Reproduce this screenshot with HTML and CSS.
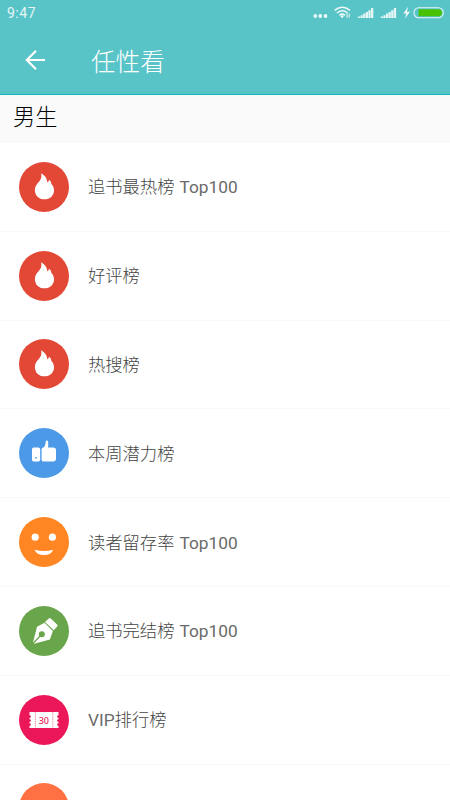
FILE: index.html
```html
<!DOCTYPE html>
<html lang="zh-CN">
<head>
    <meta charset="utf-8">
    <meta name="viewport" content="width=device-width, initial-scale=1.0">
    <title>任性看</title>
    <link rel="stylesheet" href="styles.css">
</head>
<body>
    <header class="app-header">
        <div class="status-bar">
            <span class="clock">9:47</span>
            <svg class="status-icons" width="134" height="20" viewBox="0 0 134 20" fill="#fff">
                <g opacity=".9">
                    <circle cx="2.300" cy="14" r="1.900"/>
                    <circle cx="7.300" cy="14" r="1.900"/>
                    <circle cx="12.500" cy="14" r="1.900"/>
                </g>
                <!-- wifi -->
                <g fill="none" stroke="#fff" stroke-width="1.500" opacity=".9">
                    <path d="M21.600 8.400Q29.300 2 37 8.400"/>
                    <path d="M24 11Q29.200 6.600 34.600 11"/>
                    <path d="M26.400 13.300Q29.200 11 32 13.300"/>
                    <path d="M34.100 11.500v4.200M36.200 11.500v4.200" stroke-width="1"/>
                </g>
                <circle cx="29.100" cy="14.500" r="1.300"/>
                <!-- signal bars -->
                <path id="signal" opacity=".85" d="M45 14.600h2.200v1.400H45zM47.600 13.200h2.200V16h-2.200zM50.200 11.600h2.200V16h-2.200zM52.800 10h2.200v6h-2.200zM55.400 8.200h2.200V16h-2.200zM58 6h2.300v10H58z"/>
                <use href="#signal" x="22.800"/>
                <path d="M95 4.800l-4.600 6.600h2.800l-1.200 5 5-6.600h-3z" opacity=".9"/>
                <rect x="101" y="5.700" width="29.200" height="10" rx="4.700" fill="none" stroke="#fff" stroke-width="1.100" opacity=".85"/>
                <path d="M105.600 7.200h19.800a3.500 3.500 0 0 1 0 7H105.600z" fill="#48c200"/>
            </svg>
        </div>
        <div class="toolbar">
            <svg class="back" width="22" height="22" viewBox="0 0 22 22" fill="none" stroke="#fff" stroke-width="2.200">
                <path d="M21 11H3M12 1.800L2.800 11l9.200 9.200"/>
            </svg>
            <h1 class="title">任性看</h1>
        </div>
    </header>

    <h2 class="section-title">男生</h2>
    <ul class="rank-list">
        <li class="rank-item">
            <svg class="rank-icon red" viewBox="0 0 50 50">
                <path id="flame" fill="#fff" d="M22 11.200c3.800 2 6.200 5.200 6.400 9.300.9-.5 1.400-1.300 1.500-2.700 1.700 1.100 2.300 2.400 2.400 4 1.700 2 2.700 4 2.700 6.600 0 5.200-4.200 8.900-9.600 8.900-5.600 0-9.500-3.900-9.500-9.400 0-4 2.100-5.900 4.300-8.500 1.900-2.300 2.800-4.800 1.800-8.200z"/>
            </svg>
            <span class="rank-name">追书最热榜 <span class="latin">Top100</span></span>
        </li>
        <li class="rank-item">
            <svg class="rank-icon red" viewBox="0 0 50 50"><use href="#flame"/></svg>
            <span class="rank-name">好评榜</span>
        </li>
        <li class="rank-item">
            <svg class="rank-icon red" viewBox="0 0 50 50"><use href="#flame"/></svg>
            <span class="rank-name">热搜榜</span>
        </li>
        <li class="rank-item">
            <svg class="rank-icon blue" viewBox="0 0 50 50">
                <rect x="13" y="19.600" width="8.200" height="14" rx="1.800" fill="#fff"/>
                <circle cx="17" cy="29.800" r=".9" fill="#4c99e8"/>
                <path fill="#fff" d="M22.600 21.300q0-1.500 1.700-1.800c1.500-.4 2.200-3.200 2.300-5.300.1-2.300 2.500-2 2.600.1.200 2 .1 3.600-.2 5.200h5.100q2.900 0 2.900 2.600v8.500q0 3-3 3h-9q-2.400 0-2.400-2.200z"/>
            </svg>
            <span class="rank-name">本周潜力榜</span>
        </li>
        <li class="rank-item">
            <svg class="rank-icon orange" viewBox="0 0 50 50">
                <circle cx="16.200" cy="20.200" r="3.600" fill="#fff"/>
                <circle cx="33.400" cy="20.200" r="3.600" fill="#fff"/>
                <path fill="#fff" d="M15.600 32.700q9.400 2.400 18.600 0-2 5.400-9.300 5.400t-9.300-5.400z"/>
            </svg>
            <span class="rank-name">读者留存率 <span class="latin">Top100</span></span>
        </li>
        <li class="rank-item">
            <svg class="rank-icon green" viewBox="0 0 50 50">
                <path fill="#fff" d="M29.800 12.500q1-1 2-.1l6.300 6q1 1 .1 2l-3.400 3.800-8.800-8.200z"/>
                <path fill="#fff" d="M25.500 16.700l8.400 8.300-3 8.600-15.700 4.200-1.200-1.200 4-15.900z"/>
                <path d="M14 37.500l8.500-9" stroke="#69a54a" stroke-width="1.200"/>
                <circle cx="22.800" cy="28.200" r="3" fill="#69a54a"/>
            </svg>
            <span class="rank-name">追书完结榜 <span class="latin">Top100</span></span>
        </li>
        <li class="rank-item">
            <svg class="rank-icon pink" viewBox="0 0 50 50">
                <path fill="#fff" d="M10.500 17h29v3.200a1.400 1.400 0 0 0 0 2.800v1.200a1.400 1.400 0 0 0 0 2.800v1.200a1.400 1.400 0 0 0 0 2.800v2h-29v-2a1.400 1.400 0 0 0 0-2.800V27a1.400 1.400 0 0 0 0-2.800V23a1.400 1.400 0 0 0 0-2.800z"/>
                <path d="M16.400 17v16M33.800 17v16" stroke="#eb1759" stroke-width=".6" stroke-dasharray="1 .8"/>
                <text class="ticket-number" x="24.800" y="28.500" text-anchor="middle">30</text>
            </svg>
            <span class="rank-name"><span class="latin">VIP</span>排行榜</span>
        </li>
        <li class="rank-item">
            <svg class="rank-icon coral" viewBox="0 0 50 50"></svg>
        </li>
    </ul>
</body>
</html>
```

FILE: styles.css
```css
body {
    margin: 0;
    height: 800px;
    overflow: hidden;
    background-color: #fff;
    font-family: Roboto, "Noto Sans CJK SC", sans-serif;
}

h1, h2, ul { margin: 0; padding: 0; }

/* Header */
.app-header {
    height: 95px;
    box-sizing: border-box;
    background-color: #58c4c8;
    border-bottom: 1px solid #14b9bd;
    color: #fff;
}
.status-bar {
    display: flex;
    justify-content: space-between;
    height: 26px;
    padding: 2px 3px 0 7px;
    box-sizing: border-box;
}
.clock {
    font-size: 14px;
    line-height: 23px;
    letter-spacing: 0.5px;
    opacity: 0.85;
}
.toolbar {
    display: flex;
    align-items: center;
    height: 68px;
    padding-left: 24px;
}
.title {
    margin-left: 45px;
    padding-top: 6px;
    font-size: 24.6px;
    font-weight: 300;
    line-height: 36px;
}

/* Ranking list */
.section-title {
    height: 48px;
    padding-left: 13px;
    box-sizing: border-box;
    background-color: #fafafa;
    color: #000;
    font-size: 22.2px;
    font-weight: 300;
    line-height: 45px;
}
.rank-list {
    height: 657px;
    overflow: hidden;
    list-style: none;
}
.rank-item {
    display: flex;
    align-items: center;
    gap: 19px;
    height: 88.8px;
    padding-left: 19px;
    box-sizing: border-box;
    border-bottom: 1px solid #f8f8f8;
}
.rank-icon {
    width: 50px;
    height: 50px;
    border-radius: 50%;
}
.rank-name {
    padding-top: 1px;
    color: #444;
    font-size: 17.3px;
    font-weight: 300;
    line-height: 26px;
    word-spacing: 0.8px;
}
.latin {
    color: #6a6a6a;
    font-weight: 400;
}
.ticket-number {
    fill: #eb1759;
    font-family: "Noto Sans", sans-serif;
    font-size: 9px;
    font-weight: 500;
}

.red { background-color: #e34837; }
.blue { background-color: #4c99e8; }
.orange { background-color: #ff8622; }
.green { background-color: #69a54a; }
.pink { background-color: #eb1759; }
.coral { background-color: #ff7043; }
```
